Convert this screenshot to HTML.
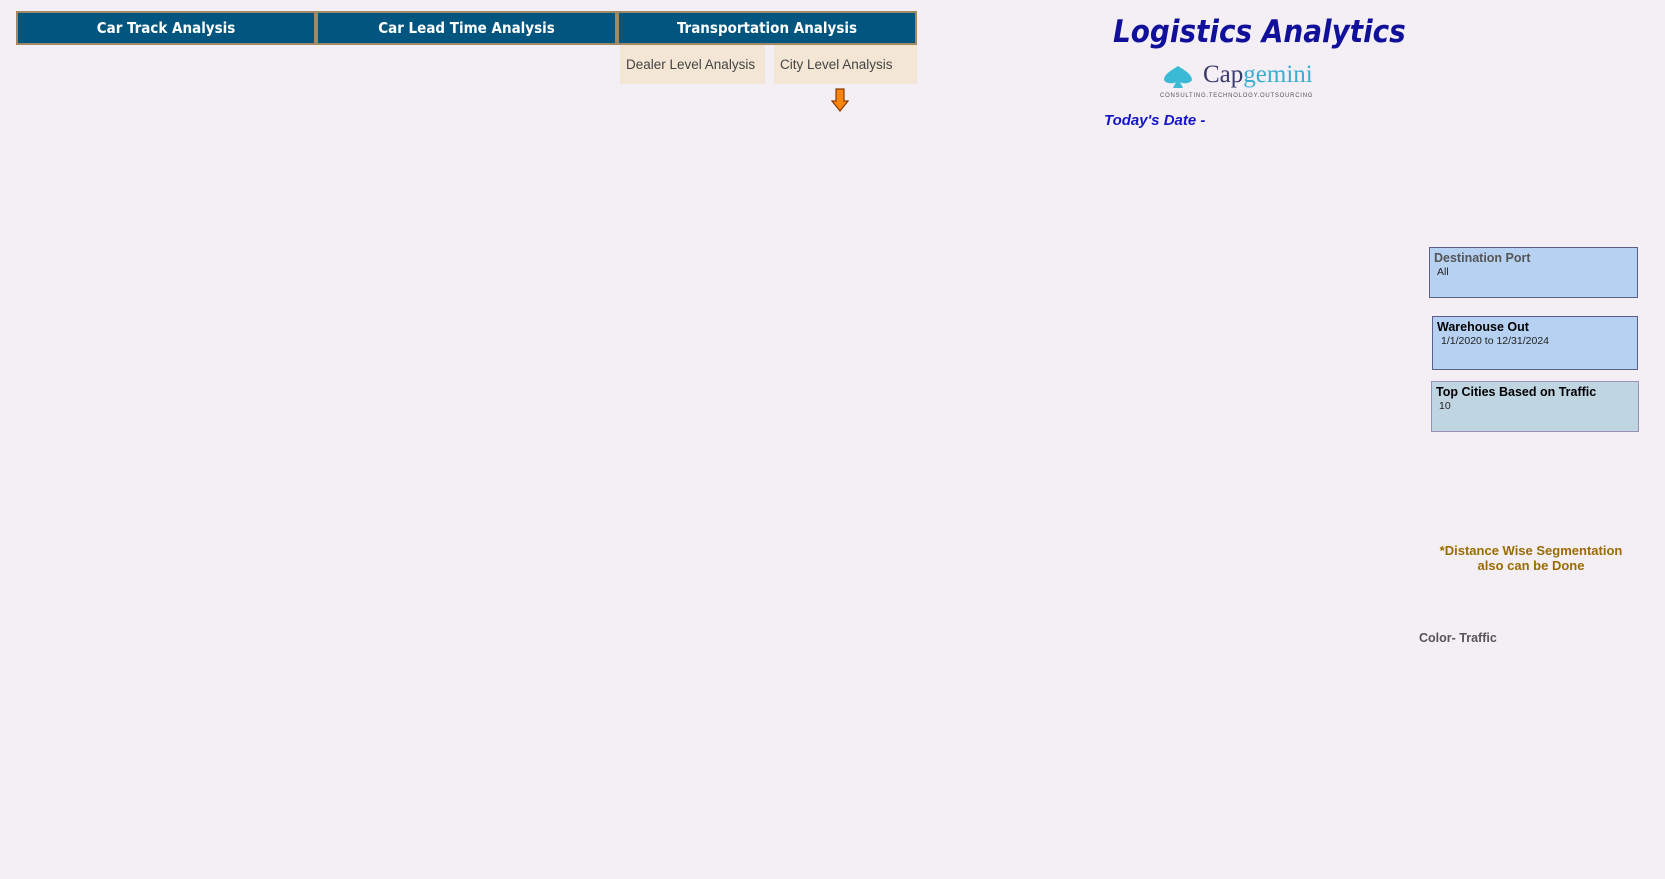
<!DOCTYPE html>
<html><head><meta charset="utf-8"><style>
body{margin:0;width:1665px;height:879px;background:#f4eff5;position:relative;overflow:hidden;font-family:"Liberation Sans",sans-serif}
.nav{position:absolute;top:11px;height:30px;background:#02557f;border:2px solid #a08a66;color:#fff;font:bold 15px "DejaVu Sans Condensed","DejaVu Sans",sans-serif;display:flex;align-items:center;justify-content:center}
.sub{position:absolute;top:45px;height:39px;background:#f3e6d4;color:#444;font-size:13.5px;display:flex;align-items:center;padding-left:6px;box-sizing:border-box}
.box{position:absolute;background:#b6d1f1;border:1px solid #5d5f86;box-sizing:border-box;padding:3px 4px;font-size:12px}
.box b{display:block;font-size:12.5px}
.box span{display:block;font-size:10.5px;padding-left:3px;margin-top:1px;color:#222}
</style></head><body>
<div class="nav" style="left:16px;width:296px">Car Track Analysis</div>
<div class="nav" style="left:316px;width:297px">Car Lead Time Analysis</div>
<div class="nav" style="left:617px;width:296px">Transportation Analysis</div>
<div class="sub" style="left:620px;width:145px">Dealer Level Analysis</div>
<div class="sub" style="left:774px;width:143px">City Level Analysis</div>
<svg style="position:absolute;left:831px;top:88px" width="18" height="25" viewBox="0 0 18 25"><path d="M5 1h8v12h4L9 23 1 13h4z" fill="#f7840e" stroke="#8a3a00" stroke-width="1.2"/></svg>
<div style="position:absolute;left:1113px;top:14px;font:italic bold 31px 'DejaVu Sans Condensed','DejaVu Sans',sans-serif;color:#10109a">Logistics Analytics</div>
<svg style="position:absolute;left:1160px;top:60px" width="160" height="40" viewBox="0 0 160 40">
<path d="M4 20c0-6 8-10 14-14 6 4 14 8 14 14-2 4-10 4-12 2l3 6h-10l3-6c-2 2-10 2-12-2z" fill="#3bbad6"/>
<text x="43" y="22" font-family="Liberation Serif,serif" font-size="25" fill="#3a3a6e">Cap<tspan fill="#3aaed0">gemini</tspan></text>
<text x="0" y="37" font-family="Liberation Sans,sans-serif" font-size="6" fill="#555" letter-spacing="0.75">CONSULTING.TECHNOLOGY.OUTSOURCING</text>
</svg>
<div style="position:absolute;left:1104px;top:112px;font:italic bold 15px 'Liberation Sans',sans-serif;color:#1515c8">Today's Date -</div>
<div class="box" style="left:1429px;top:247px;width:209px;height:51px;color:#444"><b style="font-weight:bold;color:#555">Destination Port</b><span>All</span></div>
<div class="box" style="left:1432px;top:316px;width:206px;height:54px"><b>Warehouse Out</b><span style="padding-left:4px">1/1/2020 to 12/31/2024</span></div>
<div class="box" style="left:1431px;top:381px;width:208px;height:51px;background:#bfd5e2;border-color:#9a90b8"><b>Top Cities Based on Traffic</b><span>10</span></div>
<div style="position:absolute;left:1431px;width:200px;top:543px;text-align:center;font:bold 13px 'Liberation Sans',sans-serif;color:#9a6b00;line-height:15px">*Distance Wise Segmentation<br>also can be Done</div>
<div style="position:absolute;left:1419px;top:631px;font:bold 12.5px 'Liberation Sans',sans-serif;color:#555">Color- Traffic</div>
</body></html>
